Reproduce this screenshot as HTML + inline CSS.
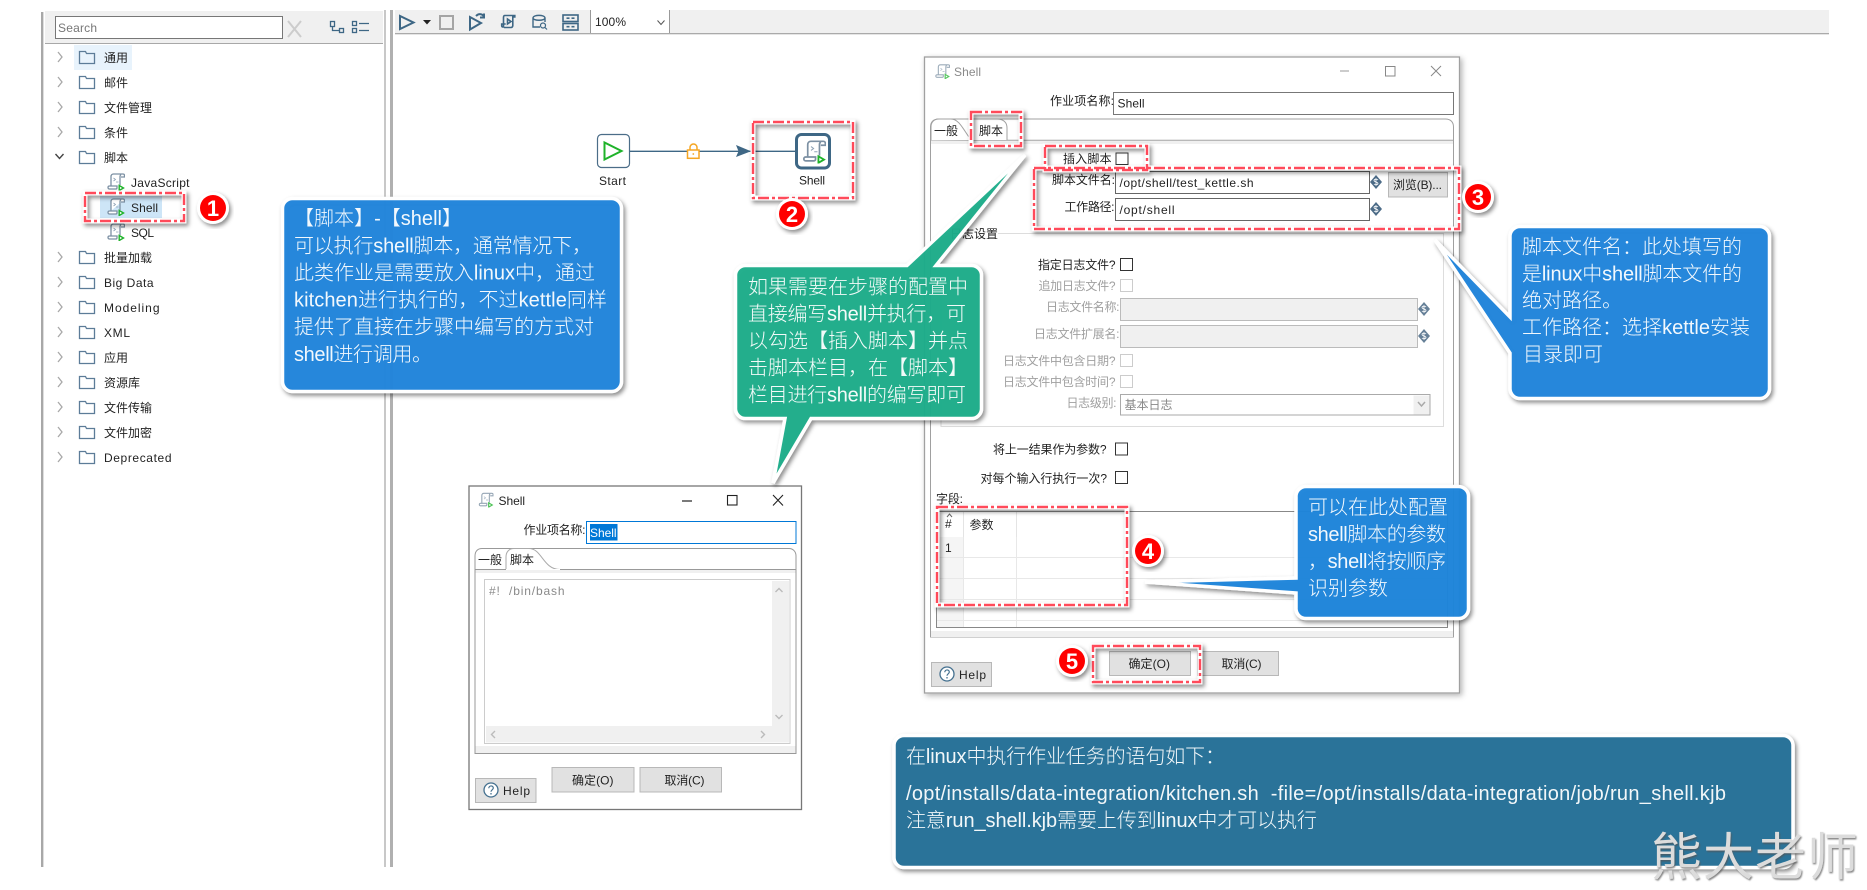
<!DOCTYPE html>
<html><head><meta charset="utf-8"><style>
html,body{margin:0;padding:0;background:#fff;width:1867px;height:890px;overflow:hidden}
svg{display:block}
text{font-family:"Liberation Sans","Noto Sans CJK SC",sans-serif;font-size:12px;fill:#222;white-space:pre}
.g text,text.g{fill:#a0a0a0}
.c text{font-size:20px;fill:#fff;fill-opacity:.94;font-weight:300}
.n{font-family:"Liberation Sans",sans-serif;font-weight:700;font-size:22px;fill:#fff;text-anchor:middle}
.s{fill:none;stroke:#3e6785;stroke-width:2}
.b{fill:#e1e1e1;stroke:#b8b8b8}
.cb{fill:#fff;stroke:#333;stroke-width:1}
.cg{fill:#fff;stroke:#ccc;stroke-width:1}
</style></head><body>
<svg width="1867" height="890" viewBox="0 0 1867 890" xmlns="http://www.w3.org/2000/svg">
<defs>
<filter id="sh" x="-10%" y="-10%" width="125%" height="125%"><feDropShadow dx="2" dy="2.500" stdDeviation="2" flood-color="#000" flood-opacity=".45"/></filter>
<filter id="sd" x="-5%" y="-5%" width="110%" height="110%"><feDropShadow dx="2" dy="2" stdDeviation="3" flood-color="#000" flood-opacity=".3"/></filter>
<filter id="wm" x="-5%" y="-5%" width="110%" height="115%"><feDropShadow dx="1" dy="1.500" stdDeviation=".8" flood-color="#555" flood-opacity=".7"/></filter>
<symbol id="fo" viewBox="0 0 17 14" width="17" height="14"><path d="M1 13V1h6l1 2h8v10z" fill="none" stroke="#5c7c98" stroke-width="1.300"/></symbol>
<symbol id="ar" viewBox="0 0 8 12" width="8" height="12"><path d="M2 1l4 5-4 5" fill="none" stroke="#a8a8a8" stroke-width="1.300"/></symbol>
<symbol id="sc" viewBox="0 0 18 18" width="18" height="18">
<path d="M4 13V3.500C4 2 5 1 6.500 1H16c1 0 1.500.7 1.500 1.500V4H14M14 1.500c-.7.5-1 1.100-1 2V12" fill="#fff" stroke="#7c90a3" stroke-width="1.300"/>
<path d="M1 14.500C1 13.500 1.700 13 2.500 13H10v1.700c0 .8-.7 1.300-1.500 1.300h-6C1.700 16 1 15.500 1 14.500z" fill="#fff" stroke="#7c90a3" stroke-width="1.300"/>
<path d="M6.500 5l2 1.500-2 1.500M9 9h2.500" fill="none" stroke="#8ea2b5" stroke-width=".8"/>
<path d="M12.200 12.500v5l4.300-2.500z" fill="#fff" stroke="#1fb32a" stroke-width="1.400"/></symbol>
<symbol id="dl" viewBox="0 0 12 14" width="12" height="14"><path d="M6 0l6 7-6 7-6-7z" fill="#4c6b87"/><path d="M8 5c-1-1.200-4-1-4 .5S8 7 8 8.500 5 10 4 9M6 3v8" stroke="#fff" stroke-width=".8" fill="none"/></symbol>
<symbol id="hp" viewBox="0 0 16 16" width="16" height="16"><circle cx="8" cy="8" r="7" fill="#fff" stroke="#44708f" stroke-width="1.300"/><path d="M5.800 6.200c0-3 4.500-3 4.500-.2 0 1.800-2.300 1.800-2.300 3.800" fill="none" stroke="#44708f" stroke-width="1.200"/><circle cx="8" cy="11.800" r=".8" fill="#44708f"/></symbol>
</defs>

<!-- left panel -->
<rect x="41" y="12" width="2" height="855" fill="#a8a8a8"/>
<rect x="43" y="12" width="1" height="855" fill="#dedede"/>
<rect x="45" y="11" width="338" height="32" fill="#f0f0f0"/>
<rect x="45" y="43" width="338" height="1" fill="#a8a8a8"/>
<rect x="55.500" y="16.500" width="227" height="22" fill="#fff" stroke="#777"/>
<text x="58" y="32" textLength="39" style="fill:#777">Search</text>
<path d="M288 21l13 16M301 21l-13 16" stroke="#ccc" stroke-width="2" fill="none"/>
<g fill="none" stroke="#3e6785" stroke-width="1.300"><rect x="330.500" y="21.500" width="4" height="5"/><rect x="339.500" y="28.500" width="4" height="4"/><path d="M332.500 26.500v4h7"/><rect x="352.500" y="21.500" width="4" height="4"/><rect x="352.500" y="28.500" width="4" height="4"/><path d="M359 23.500h10M359 30.500h10"/></g>

<rect x="74" y="45" width="58" height="25" fill="#e8f3fc"/>
<g>
<use href="#ar" x="56" y="51"/><use href="#fo" x="78.500" y="50.500"/><text x="104" y="62" textLength="24">通用</text>
<use href="#ar" x="56" y="76"/><use href="#fo" x="78.500" y="75.500"/><text x="104" y="87" textLength="24">邮件</text>
<use href="#ar" x="56" y="101"/><use href="#fo" x="78.500" y="100.500"/><text x="104" y="112" textLength="48">文件管理</text>
<use href="#ar" x="56" y="126"/><use href="#fo" x="78.500" y="125.500"/><text x="104" y="137" textLength="24">条件</text>
<path d="M55.500 154l4 4.500 4-4.500" fill="none" stroke="#444" stroke-width="1.400"/><use href="#fo" x="78.500" y="150.500"/><text x="104" y="162" textLength="24">脚本</text>
<use href="#sc" x="107" y="173"/><text x="131" y="187" textLength="58.500">JavaScript</text>
<rect x="100" y="196" width="62" height="22" fill="#cde5f7"/>
<use href="#sc" x="107" y="198"/><text x="131" y="212" textLength="27">Shell</text>
<use href="#sc" x="107" y="223"/><text x="131" y="237" textLength="23">SQL</text>
<use href="#ar" x="56" y="251"/><use href="#fo" x="78.500" y="250.500"/><text x="104" y="262" textLength="48">批量加载</text>
<use href="#ar" x="56" y="276"/><use href="#fo" x="78.500" y="275.500"/><text x="104" y="287" textLength="49.500">Big Data</text>
<use href="#ar" x="56" y="301"/><use href="#fo" x="78.500" y="300.500"/><text x="104" y="312" textLength="55.500">Modeling</text>
<use href="#ar" x="56" y="326"/><use href="#fo" x="78.500" y="325.500"/><text x="104" y="337" textLength="26">XML</text>
<use href="#ar" x="56" y="351"/><use href="#fo" x="78.500" y="350.500"/><text x="104" y="362" textLength="24">应用</text>
<use href="#ar" x="56" y="376"/><use href="#fo" x="78.500" y="375.500"/><text x="104" y="387" textLength="36">资源库</text>
<use href="#ar" x="56" y="401"/><use href="#fo" x="78.500" y="400.500"/><text x="104" y="412" textLength="48">文件传输</text>
<use href="#ar" x="56" y="426"/><use href="#fo" x="78.500" y="425.500"/><text x="104" y="437" textLength="48">文件加密</text>
<use href="#ar" x="56" y="451"/><use href="#fo" x="78.500" y="450.500"/><text x="104" y="462" textLength="67.500">Deprecated</text>
</g>

<!-- sash -->
<rect x="384" y="10" width="2" height="857" fill="#c8c8c8"/>
<rect x="390" y="10" width="3" height="857" fill="#b0b0b0"/>

<!-- toolbar -->
<rect x="395" y="10" width="1434" height="23" fill="#f0f0f0"/>
<rect x="395" y="33" width="1434" height="1.300" fill="#aaa"/>
<rect x="590.500" y="10" width="79" height="23" fill="#fff"/>
<path d="M590.500 10v23M669.500 10v23" stroke="#999"/>
<text x="595" y="26" textLength="31">100%</text>
<path d="M657.500 20.500l3.500 4 3.500-4" fill="none" stroke="#555"/>
<path d="M400 16v13l13.500-6.500z" class="s"/>
<path d="M423 20h8l-4 4.500z" fill="#222"/>
<rect x="440" y="16" width="13" height="13" fill="none" stroke="#a5a5a5" stroke-width="2"/>
<path d="M470 17v12.500l11-6.500zM476 16c3-3 7-2 8 1M484 13.500v4h-4" class="s"/>
<path d="M504 27.500h7c1.200 0 1.800-1 1.800-2V17h2v-1.500h-10c-1 0-1.300 1-1.300 2V27c-1.200 0-1.800-.4-1.800-1.300V24h4M507.500 19v5l3.500-2.500z" class="s" style="stroke-width:1.600"/>
<path d="M540 27h-7V18c0-3.500 12-3.500 12 0v4M533 18c0 3 12 3 12 0" class="s" style="stroke-width:1.400"/>
<circle cx="543" cy="25.500" r="2.500" class="s" style="stroke-width:1.200"/><path d="M545 27.500l2 2" class="s" style="stroke-width:1.200"/>
<g class="s" style="stroke-width:1.600"><rect x="563" y="15" width="15" height="6.500" fill="none"/><rect x="563" y="23.500" width="15" height="6.500" fill="none"/><path d="M566.500 18.200h3M571.500 18.200h3M566.500 26.700h3M571.500 26.700h3" fill="none"/></g>

<!-- hop and nodes -->
<rect x="597.500" y="134.500" width="32" height="33" rx="4" fill="#fff" stroke="#4b6d88" stroke-width="1.200"/>
<path d="M604.500 142.500v17l17-8.500z" fill="none" stroke="#1fb32a" stroke-width="2"/>
<text x="599" y="185" textLength="27">Start</text>
<path d="M629.500 151.300H795" stroke="#3e6785" stroke-width="1.300"/>
<path d="M736 145l15 6.300-15 5.700 2.500-5.700z" fill="#3e6785"/>
<path d="M690 150v-2.500a3.500 3.500 0 0 1 7 0V150" fill="none" stroke="#f5a623" stroke-width="1.500"/>
<rect x="687.500" y="150" width="11.500" height="8.300" fill="#fff" stroke="#f5a623" stroke-width="1.500"/>
<circle cx="693.300" cy="154" r=".9" fill="#f5a623"/>
<rect x="796.500" y="134.500" width="33" height="33.500" rx="5" fill="#fff" stroke="#3e6785" stroke-width="3"/>
<use href="#sc" x="802.500" y="140" width="23.500" height="23.500"/>
<text x="799" y="184.500" textLength="26">Shell</text>

<!-- main dialog -->
<rect x="924.500" y="57" width="535" height="636" fill="#fff" stroke="#a0a0a0" stroke-width="1.300" filter="url(#sd)"/>
<use href="#sc" x="935" y="64" width="15" height="15" opacity=".75"/>
<text x="954" y="76" textLength="27" style="fill:#8a8a8a">Shell</text>
<path d="M1340 71h9" stroke="#999"/><rect x="1385.500" y="66.500" width="9.500" height="9.500" fill="none" stroke="#888"/><path d="M1431 66l10 10M1441 66l-10 10" stroke="#888"/>
<text x="1050" y="105" textLength="64">作业项名称:</text>
<rect x="1113.500" y="92.500" width="340" height="22" fill="#fff" stroke="#777"/>
<text x="1117.500" y="107.500" textLength="27">Shell</text>
<path d="M930.500 637V127c0-5 3-8 8-8h507c5 0 8 3 8 8v510z" fill="#fff" stroke="#a0a0a0"/>
<path d="M931 140.300h522.500" stroke="#a0a0a0"/>
<rect x="931" y="141" width="522" height="3" fill="#f0f0f0"/>
<rect x="931" y="631" width="522" height="6" fill="#f0f0f0"/>
<path d="M931 140.300V127c0-5 3-8 8-8h12c8 0 12 10 20 21" fill="#fff" stroke="#a0a0a0"/>
<path d="M971 140c-3-8-1-21 3-21h23c6 0 10 3 10 9v12" fill="#fff" stroke="#a0a0a0"/>
<text x="934" y="135" textLength="24">一般</text>
<text x="979" y="135" textLength="24">脚本</text>
<text x="1063" y="163" textLength="48.500">插入脚本</text>
<rect x="1116" y="153" width="12" height="11.500" class="cb"/>
<text x="1052" y="184" textLength="63">脚本文件名:</text>
<rect x="1115.500" y="171.500" width="254" height="22" fill="#fff" stroke="#666"/>
<text x="1119.500" y="187" textLength="134">/opt/shell/test_kettle.sh</text>
<use href="#dl" x="1370" y="175"/>
<rect x="1388.500" y="172.500" width="59" height="24.500" class="b"/>
<text x="1393" y="189" textLength="49">浏览(B)...</text>
<text x="1064.500" y="211" textLength="50">工作路径:</text>
<rect x="1115.500" y="198.500" width="254" height="22" fill="#fff" stroke="#666"/>
<text x="1119.500" y="214" textLength="55">/opt/shell</text>
<use href="#dl" x="1370" y="202"/>

<text x="950" y="238" textLength="48">日志设置</text>
<path d="M998 233.500h445.500v193H941V233.500h8" fill="none" stroke="#ddd"/>
<text x="1038" y="269" textLength="77.500">指定日志文件?</text>
<rect x="1120.500" y="258.500" width="12" height="12" class="cb"/>
<rect x="1120.500" y="298.500" width="297" height="22" fill="#f0f0f0" stroke="#bbb"/>
<rect x="1120.500" y="325.500" width="297" height="22" fill="#f0f0f0" stroke="#bbb"/>
<use href="#dl" x="1418" y="302" opacity=".85"/><use href="#dl" x="1418" y="329" opacity=".85"/>
<rect x="1120.500" y="394.500" width="309.500" height="20.500" fill="#fff" stroke="#aaa"/>
<rect x="1413.500" y="395.500" width="16" height="19" fill="#f0f0f0"/>
<path d="M1418 402l3.500 4 3.500-4" fill="none" stroke="#aaa" stroke-width="1.500"/>
<g class="g">
<text x="1038.500" y="290" textLength="77">追加日志文件?</text>
<rect x="1120.500" y="279.500" width="12" height="12" class="cg"/>
<text x="1046" y="311" textLength="73.500">日志文件名称:</text>
<text x="1034" y="338" textLength="85.500">日志文件扩展名:</text>
<text x="1003" y="365" textLength="112.500">日志文件中包含日期?</text>
<rect x="1120.500" y="354.500" width="12" height="12" class="cg"/>
<text x="1003" y="386" textLength="112.500">日志文件中包含时间?</text>
<rect x="1120.500" y="375.500" width="12" height="12" class="cg"/>
<text x="1066.500" y="407" textLength="50">日志级别:</text>
<text x="1124.500" y="409" textLength="48" style="fill:#888">基本日志</text>
</g>
<text x="993" y="453.500" textLength="113.500">将上一结果作为参数?</text>
<rect x="1115.500" y="443" width="12" height="12" class="cb"/>
<text x="980.500" y="482.500" textLength="126.500">对每个输入行执行一次?</text>
<rect x="1115.500" y="471.500" width="12" height="12" class="cb"/>
<text x="936" y="503" textLength="27">字段:</text>
<rect x="936.500" y="511.500" width="511" height="116" fill="#fff" stroke="#888"/>
<rect x="937" y="537" width="26" height="90" fill="#f5f5f5"/>
<path d="M963.500 512v115M1016.500 537v90M937 557.500h510M937 578.500h510M937 599.500h510M937 620.500h510" stroke="#e8e8e8"/>
<path d="M963.500 512v25M1016.500 512v25" stroke="#e4e4e4"/>
<path d="M947 517l2.500-3 2.500 3" fill="none" stroke="#666"/>
<text x="945" y="528" textLength="7.500">#</text>
<text x="969.500" y="529" textLength="24">参数</text>
<text x="945" y="552" textLength="6.500">1</text>
<rect x="931.500" y="662.500" width="60" height="24" class="b"/>
<use href="#hp" x="939" y="666"/>
<text x="959" y="679" textLength="27">Help</text>
<rect x="1109.500" y="651.500" width="81" height="24" class="b"/>
<text x="1128.500" y="668" textLength="41.500">确定(O)</text>
<rect x="1197.500" y="651.500" width="81" height="24" class="b"/>
<text x="1221.500" y="668" textLength="40">取消(C)</text>

<!-- second dialog -->
<rect x="469" y="486" width="332.500" height="323.500" fill="#fff" stroke="#777" stroke-width="1.300"/>
<use href="#sc" x="478.500" y="492.500" width="15" height="15" opacity=".8"/>
<text x="498.500" y="505" textLength="26.500">Shell</text>
<path d="M682 501h10" stroke="#222" stroke-width="1.200"/><rect x="727.500" y="495.500" width="9.500" height="9.500" fill="none" stroke="#222" stroke-width="1.100"/><path d="M773 495l10 10.500M783 495l-10 10.500" stroke="#222" stroke-width="1.100"/>
<text x="523.500" y="534" textLength="62">作业项名称:</text>
<rect x="586.500" y="521.500" width="209.500" height="22" fill="#fff" stroke="#0078d7"/>
<rect x="590" y="524" width="27.500" height="16.500" fill="#0078d7"/>
<text x="590" y="537" textLength="26.500" style="fill:#fff">Shell</text>
<path d="M475 753.500V556c0-5 3-7.500 7-7.500h307c4 0 7 3 7 7.500v197.500z" fill="#fff" stroke="#999"/>
<path d="M475 569.500h321" stroke="#999"/>
<rect x="475.500" y="570" width="320" height="3" fill="#f0f0f0"/>
<rect x="475.500" y="746" width="320" height="7" fill="#f0f0f0"/>
<path d="M506 569V557c0-5 3-8.500 8-8.500h15c13 0 14 21 31 21" fill="#fff" stroke="#aaa"/>
<path d="M506 569.500h54" stroke="#fff"/>
<text x="478" y="564" textLength="24">一般</text>
<text x="510" y="564" textLength="24">脚本</text>
<rect x="484.500" y="579.500" width="305.500" height="164" fill="#fff" stroke="#ccc"/>
<rect x="772" y="581" width="17" height="145" fill="#f0f0f0"/>
<rect x="486" y="726" width="303" height="16.500" fill="#f0f0f0"/>
<path d="M775.500 592l3.500-3.500 3.500 3.500M775.500 715l3.500 3.500 3.500-3.500M495 731l-3.500 3.500 3.500 3.500M761 731l3.500 3.500-3.500 3.500" fill="none" stroke="#bbb" stroke-width="1.400"/>
<text x="489" y="595" textLength="75.500" style="fill:#8a8a8a">#!  /bin/bash</text>
<rect x="475.500" y="778.500" width="60.500" height="24" class="b"/>
<use href="#hp" x="483" y="782"/>
<text x="503" y="795" textLength="27">Help</text>
<rect x="552" y="767.500" width="82" height="24.500" class="b"/>
<text x="572" y="784.500" textLength="41.500">确定(O)</text>
<rect x="640" y="767.500" width="81.500" height="24.500" class="b"/>
<text x="664.500" y="784.500" textLength="40">取消(C)</text>

<!-- callouts -->
<rect x="282.500" y="198.500" width="339" height="193" rx="10" fill="#2085db" fill-opacity=".97" stroke="#fff" stroke-width="3.500" filter="url(#sh)"/>
<path d="M746 265.500H907L1025 155 936 265.500H971a10 10 0 0 1 10.500 10.500V408a10 10 0 0 1-10.500 10.500H811L773 483 785 418.500H746a10 10 0 0 1-10.500-10.500V276a10 10 0 0 1 10.500-10.500Z" fill="#1fae8a" fill-opacity=".95" stroke="#fff" stroke-width="3.500" filter="url(#sh)"/>
<path d="M1520 226.500H1759a10 10 0 0 1 10.500 10.500V388a10 10 0 0 1-10.500 10.500H1520a10 10 0 0 1-10-10.500V353L1435 240 1510 317V237a10 10 0 0 1 10-10.500Z" fill="#2085db" fill-opacity=".97" stroke="#fff" stroke-width="3.500" filter="url(#sh)"/>
<path d="M1306 486.500H1458a10 10 0 0 1 10.500 10.500V608a10 10 0 0 1-10.500 10.500H1306a10 10 0 0 1-10-10.500V593L1145 582 1296 578V497a10 10 0 0 1 10-10.500Z" fill="#2085db" fill-opacity=".95" stroke="#fff" stroke-width="3.500" filter="url(#sh)"/>
<rect x="894" y="735.500" width="899" height="132" rx="10" fill="#2a7399" stroke="#fff" stroke-width="3.500" filter="url(#sh)"/>

<g class="c">
<text x="294" y="225" textLength="168">【脚本】-【shell】</text>
<text x="294" y="252.500" textLength="298">可以执行shell脚本，通常情况下，</text>
<text x="294" y="279.500" textLength="301">此类作业是需要放入linux中，通过</text>
<text x="294" y="306.500" textLength="313">kitchen进行执行的，不过kettle同样</text>
<text x="294" y="333.500" textLength="300">提供了直接在步骤中编写的方式对</text>
<text x="294" y="361" textLength="138">shell进行调用。</text>

<text x="748" y="293.500" textLength="220">如果需要在步骤的配置中</text>
<text x="748" y="320.500" textLength="218">直接编写shell并执行，可</text>
<text x="748" y="347.500" textLength="220">以勾选【插入脚本】并点</text>
<text x="748" y="374.500" textLength="220">击脚本栏目，在【脚本】</text>
<text x="748" y="401.500" textLength="218">栏目进行shell的编写即可</text>

<text x="1522" y="253.500" textLength="220">脚本文件名：此处填写的</text>
<text x="1522" y="280.500" textLength="220">是linux中shell脚本文件的</text>
<text x="1522" y="307" textLength="100">绝对路径。</text>
<text x="1522" y="334" textLength="228">工作路径：选择kettle安装</text>
<text x="1523" y="361" textLength="80">目录即可</text>

<text x="1308" y="514" textLength="140">可以在此处配置</text>
<text x="1308" y="541" textLength="138">shell脚本的参数</text>
<text x="1308" y="568" textLength="138">，shell将按顺序</text>
<text x="1308" y="595" textLength="80">识别参数</text>

<text x="906" y="763" textLength="319">在linux中执行作业任务的语句如下：</text>
<text x="906" y="800" textLength="820">/opt/installs/data-integration/kitchen.sh  -file=/opt/installs/data-integration/job/run_shell.kjb</text>
<text x="906" y="827" textLength="411">注意run_shell.kjb需要上传到linux中才可以执行</text>
</g>

<!-- red dashed boxes -->
<g fill="none">
<g stroke="#fff" stroke-width="5" filter="url(#sh)">
<rect x="85" y="193" width="99" height="28"/>
<rect x="753" y="122" width="100" height="76"/>
<rect x="971" y="112" width="50" height="34"/>
<rect x="1034" y="168" width="425" height="61"/>
<rect x="1045" y="146" width="102" height="24"/>
<rect x="937" y="507" width="190" height="98"/>
<rect x="1093" y="646" width="107" height="36"/>
</g>
<g stroke="#ff4a5a" stroke-width="2.400" stroke-dasharray="11 3 3 3">
<rect x="85" y="193" width="99" height="28"/>
<rect x="753" y="122" width="100" height="76"/>
<rect x="971" y="112" width="50" height="34"/>
<rect x="1034" y="168" width="425" height="61"/>
<rect x="1045" y="146" width="102" height="24"/>
<rect x="937" y="507" width="190" height="98"/>
<rect x="1093" y="646" width="107" height="36"/>
</g>
</g>

<!-- badges -->
<g>
<circle cx="213" cy="208" r="16" fill="#fff" filter="url(#sh)"/><circle cx="213" cy="208" r="13" fill="#f00"/><text class="n" x="213" y="216">1</text>
<circle cx="792" cy="214" r="16" fill="#fff" filter="url(#sh)"/><circle cx="792" cy="214" r="13" fill="#f00"/><text class="n" x="792" y="222">2</text>
<circle cx="1478" cy="197" r="16" fill="#fff" filter="url(#sh)"/><circle cx="1478" cy="197" r="13" fill="#f00"/><text class="n" x="1478" y="205">3</text>
<circle cx="1148" cy="551" r="16" fill="#fff" filter="url(#sh)"/><circle cx="1148" cy="551" r="13" fill="#f00"/><text class="n" x="1148" y="559">4</text>
<circle cx="1072" cy="661" r="16" fill="#fff" filter="url(#sh)"/><circle cx="1072" cy="661" r="13" fill="#f00"/><text class="n" x="1072" y="669">5</text>
</g>

<!-- watermark -->
<text x="1651" y="875" textLength="207" filter="url(#wm)" style="font-size:51px;fill:#dcdcdc">熊大老师</text>
</svg>
</body></html>
